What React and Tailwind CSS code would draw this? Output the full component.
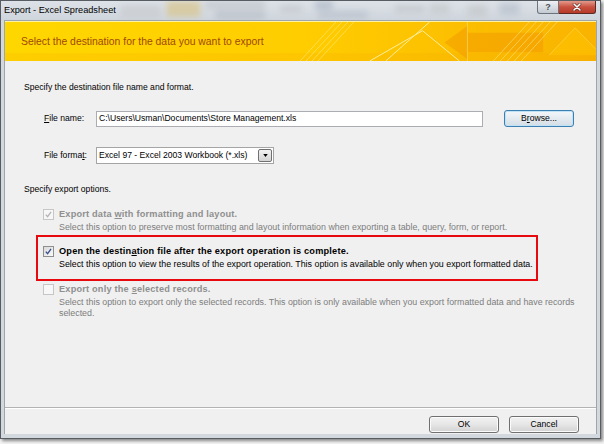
const ui = "font-['Liberation_Sans',Arial,sans-serif]";

function CheckMark({ color }) {
  return (
    <svg viewBox="0 0 11 11" className="h-full w-full">
      <path
        d="M2.2 5.6 L4.4 8.2 L8.6 2.4"
        fill="none"
        stroke={color}
        strokeWidth="1.6"
      />
    </svg>
  );
}

function Checkbox({ checked, disabled }) {
  return (
    <div
      className={
        "flex h-[11px] w-[11px] shrink-0 items-center justify-center border " +
        (disabled
          ? "border-[#c6c6c6] bg-[#f7f7f7]"
          : "border-[#8e8f8f] bg-gradient-to-br from-[#d9d9d9] to-[#fbfbfb]")
      }
    >
      {checked && (
        <CheckMark color={disabled ? "#b4b4b4" : "#3a4e8e"} />
      )}
    </div>
  );
}

function Option({ checked, disabled, label, children }) {
  return (
    <div className="flex">
      <div className="mt-[1px]">
        <Checkbox checked={checked} disabled={disabled} />
      </div>
      <div className="ml-[5px]">
        <div
          className={
            "text-[9.2px] font-bold leading-[12px] tracking-[0.2px] " +
            (disabled ? "text-[#8f8f8f]" : "text-black")
          }
        >
          {label}
        </div>
        <div
          className={
            "mt-[2px] text-[8.85px] leading-[11px] " +
            (disabled ? "text-[#7d7d7d]" : "text-black")
          }
        >
          {children}
        </div>
      </div>
    </div>
  );
}

function TitleBar() {
  return (
    <div className="relative flex h-[19px] items-center overflow-hidden bg-gradient-to-b from-[#dde2e8] to-[#cfd5dc]">
      <svg className="absolute inset-0 h-full w-full" viewBox="0 0 601 19">
        <defs>
          <filter id="blur" x="-20%" y="-50%" width="140%" height="200%">
            <feGaussianBlur stdDeviation="3" />
          </filter>
        </defs>
        <g filter="url(#blur)" opacity="0.7">
          <rect x="120" y="4" width="40" height="14" fill="#c9ccd0" />
          <rect x="166" y="0" width="34" height="16" fill="#d8c48a" />
          <rect x="205" y="0" width="60" height="8" fill="#bfc4ca" />
          <rect x="215" y="10" width="50" height="9" fill="#b9bfc7" />
          <rect x="280" y="4" width="22" height="8" fill="#c4c8cd" />
          <rect x="315" y="0" width="18" height="8" fill="#a8b4c4" />
          <rect x="318" y="10" width="50" height="8" fill="#b8c0cb" />
          <rect x="395" y="4" width="30" height="8" fill="#c2c6cb" />
          <rect x="430" y="2" width="20" height="12" fill="#c6cacf" />
          <rect x="468" y="4" width="20" height="12" fill="#c4c8cc" />
          <rect x="500" y="2" width="20" height="12" fill="#b7c0cc" />
        </g>
      </svg>
      <span className={"relative ml-[3px] text-[9.2px] text-black " + ui}>
        Export - Excel Spreadsheet
      </span>
      <div className="relative ml-auto mr-[4px] flex self-start">
        <div className="flex h-[13px] w-[22px] items-center justify-center rounded-bl-[3px] border border-t-0 border-[#6d747c] bg-gradient-to-b from-[#eef1f4] to-[#c3cad2]">
          <span className={"text-[9px] font-bold leading-none text-[#4a5058] " + ui}>
            ?
          </span>
        </div>
        <div className="flex h-[13px] w-[37px] items-center justify-center rounded-br-[3px] border border-l-0 border-t-0 border-[#5b2a22] bg-gradient-to-b from-[#e39a8c] via-[#c9503f] to-[#b73a28]">
          <svg viewBox="0 0 10 8" className="h-[8px] w-[10px]">
            <path
              d="M2 1 L8 7 M8 1 L2 7"
              stroke="#5a2018"
              strokeWidth="2.6"
              strokeLinecap="round"
            />
            <path
              d="M2 1 L8 7 M8 1 L2 7"
              stroke="#ffffff"
              strokeWidth="1.6"
              strokeLinecap="round"
            />
          </svg>
        </div>
      </div>
    </div>
  );
}

function Banner() {
  return (
    <div className="relative flex h-[40px] items-center overflow-hidden border-t border-[#fff3a0] bg-gradient-to-r from-[#ffd700] via-[#ffcd00] to-[#f9b300]">
      <svg
        className="absolute inset-0 h-full w-full"
        viewBox="0 0 593 40"
        preserveAspectRatio="none"
      >
        <rect x="0" y="32" width="593" height="8" fill="#f5a800" opacity="0.18" />
        <g stroke="#fff6b0" strokeWidth="0.8" opacity="0.55">
          <line x1="296" y1="40" x2="332" y2="0" />
          <line x1="302" y1="40" x2="338" y2="0" />
          <line x1="308" y1="40" x2="344" y2="0" />
          <line x1="314" y1="40" x2="350" y2="0" />
        </g>
        <g stroke="#fff8c8" strokeWidth="1" opacity="0.8">
          <line x1="366" y1="40" x2="419" y2="9" />
          <line x1="419" y1="9" x2="456" y2="40" />
          <line x1="382" y1="40" x2="426" y2="0" />
        </g>
        <polygon
          points="441,21 464,4 464,11 540,11 540,31 464,31 464,38"
          fill="#f39a00"
          opacity="0.55"
        />
        <line x1="464" y1="0" x2="464" y2="40" stroke="#ffe080" strokeWidth="0.8" opacity="0.7" />
        <g stroke="#ffe07a" strokeWidth="0.9" opacity="0.7">
          <line x1="490" y1="40" x2="526" y2="0" />
          <line x1="497" y1="40" x2="533" y2="0" />
          <line x1="504" y1="40" x2="540" y2="0" />
          <line x1="511" y1="40" x2="547" y2="0" />
          <line x1="518" y1="40" x2="554" y2="0" />
        </g>
        <polygon points="546,34 572,6 593,28 593,34" fill="#ffc400" opacity="0.5" />
        <g stroke="#ffd650" strokeWidth="0.8" opacity="0.8">
          <line x1="546" y1="34" x2="572" y2="6" />
          <line x1="572" y1="6" x2="593" y2="28" />
        </g>
      </svg>
      <span className={"relative ml-[16px] text-[10.4px] text-[#a04800] " + ui}>
        Select the destination for the data you want to export
      </span>
    </div>
  );
}

function Button({ children, primary }) {
  return (
    <div
      className={
        "flex h-[17px] w-[70px] items-center justify-center rounded-[3px] border bg-gradient-to-b text-black " +
        (primary
          ? "border-[#3c7fb1] from-[#f3f7fa] via-[#e4ebf0] to-[#d4dde5] shadow-[inset_0_0_0_1px_#bfe2f7]"
          : "border-[#707070] from-[#f2f2f2] via-[#e6e6e6] to-[#d2d2d2] shadow-[inset_0_0_0_1px_#fbfbfb]")
      }
    >
      {children}
    </div>
  );
}

export default function App() {
  return (
    <div className={"relative h-[444px] w-[604px] overflow-hidden bg-[#f4f4f4] " + ui}>
      <div className="flex h-[439px] w-[601px] flex-col border border-[#575c63] bg-[#d3d8de] shadow-[2px_2px_3px_rgba(0,0,0,0.45)]">
        <TitleBar />
        <div className="mx-[3px] flex flex-1 flex-col border border-b-0 border-[#9ea5ad]">
          <Banner />
          <div className="flex flex-1 flex-col bg-[#f0f0f0] text-[8.6px] leading-[11px] text-black">
            <div className="ml-[19px] mt-[21px]">
              Specify the destination file name and format.
            </div>

            <div className="mt-[17px] flex h-[17px] items-center">
              <div className="ml-[39px] w-[52px]">
                <span className="underline">F</span>ile name:
              </div>
              <div className="flex h-[16px] w-[387px] items-center border border-[#abadb3] bg-white pl-[2px]">
                {"C:\\Users\\Usman\\Documents\\Store Management.xls"}
              </div>
              <div className="ml-[21px]">
                <Button primary>
                  B<span className="underline">r</span>owse...
                </Button>
              </div>
            </div>

            <div className="mt-[20px] flex h-[17px] items-center">
              <div className="ml-[39px] w-[52px]">
                File forma<span className="underline">t</span>:
              </div>
              <div className="flex h-[17px] w-[178px] items-center border border-[#a5a5a5] bg-white pl-[2px] pr-[1px]">
                <span className="flex-1">
                  Excel 97 - Excel 2003 Workbook (*.xls)
                </span>
                <div className="flex h-[13px] w-[14px] items-center justify-center rounded-[2px] border border-[#707070] bg-gradient-to-b from-[#f2f2f2] to-[#d4d4d4]">
                  <svg viewBox="0 0 6 4" className="h-[3px] w-[5px]">
                    <polygon points="0,0 6,0 3,4" fill="#000" />
                  </svg>
                </div>
              </div>
            </div>

            <div className="ml-[19px] mt-[20px]">Specify export options.</div>

            <div className="ml-[38px] mt-[13px]">
              <Option
                checked
                disabled
                label={
                  <>
                    Export data <span className="underline">w</span>ith
                    formatting and layout.
                  </>
                }
              >
                Select this option to preserve most formatting and layout
                information when exporting a table, query, form, or report.
              </Option>
            </div>

            <div className="ml-[31px] mt-[2px] w-[502px] border-2 border-[#e8090f] pb-[9px] pl-[5px] pt-[8px]">
              <Option
                checked
                label={
                  <>
                    Open the destin<span className="underline">a</span>tion file
                    after the export operation is complete.
                  </>
                }
              >
                Select this option to view the results of the export operation.
                This option is available only when you export formatted data.
              </Option>
            </div>

            <div className="ml-[38px] mt-[2px]">
              <Option
                disabled
                label={
                  <>
                    Export only the <span className="underline">s</span>elected
                    records.
                  </>
                }
              >
                Select this option to export only the selected records. This
                option is only available when you export formatted data and have
                records
                <br />
                selected.
              </Option>
            </div>

            <div className="flex-1" />

            <div className="h-px bg-[#b3b3b3]" />
            <div className="h-px bg-white" />
            <div className="mb-[1px] mt-[7px] flex justify-end gap-[10px] pr-[17px]">
              <Button>OK</Button>
              <Button>Cancel</Button>
            </div>
          </div>
        </div>
        <div className="h-[4px]" />
      </div>
    </div>
  );
}
